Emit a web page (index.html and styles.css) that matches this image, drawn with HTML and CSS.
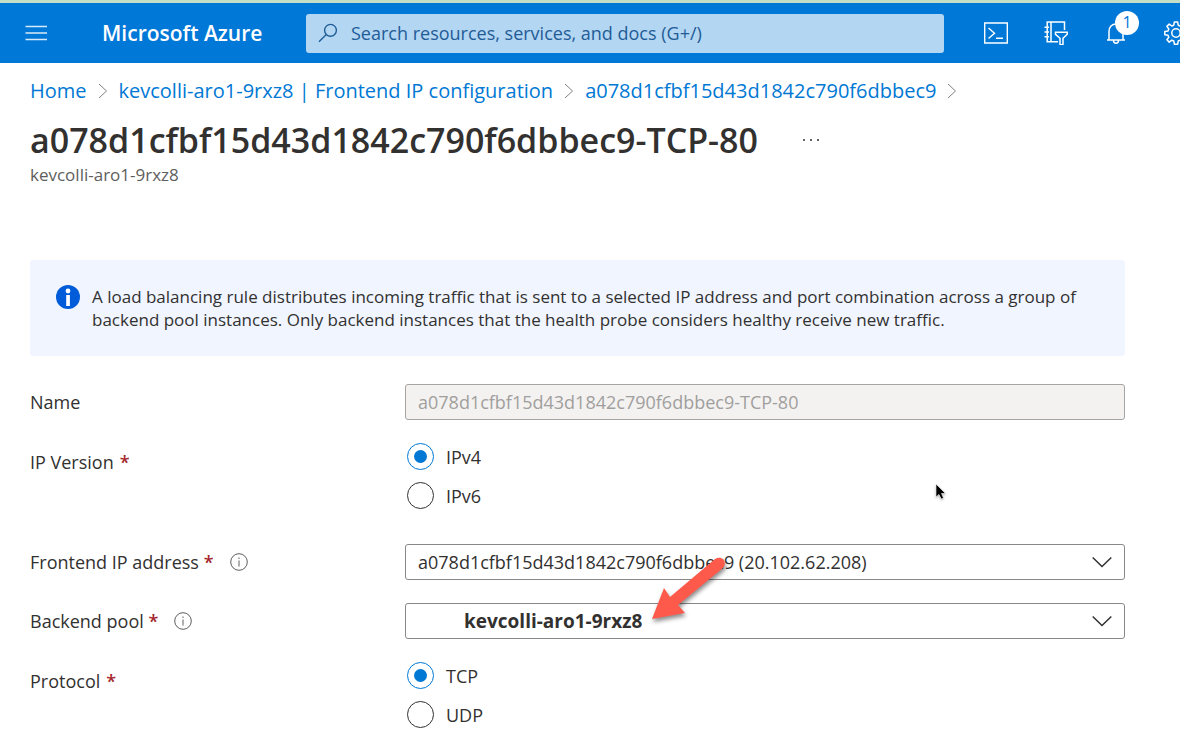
FILE: index.html
```html
<!DOCTYPE html>
<html lang="en">
<head>
<meta charset="utf-8">
<title>Load balancing rule - Microsoft Azure</title>
<meta name="viewport" content="width=device-width, initial-scale=1">
<link rel="stylesheet" href="styles.css">
</head>
<body>
<header class="topbar">
  <button class="icon-button" type="button" aria-label="Show portal menu">
    <svg width="24" height="24" viewBox="0 0 24 24" fill="none" stroke="#d7eaf9" stroke-width="1.5"><path d="M1.500 5.500H23M1.500 12H23M1.500 18.500H23"/></svg>
  </button>
  <a class="brand" href="#">Microsoft Azure</a>
  <div class="search">
    <svg width="20" height="20" viewBox="0 0 20 20" fill="none" stroke="#1f5c97" stroke-width="1.400"><circle cx="12.500" cy="7.300" r="5.900"/><path d="M8.300 11.500 1 18.700"/></svg>
    <input class="search-input" type="text" aria-label="Search" placeholder="Search resources, services, and docs (G+/)">
  </div>
  <nav class="tools" aria-label="Portal tools">
    <button class="icon-button" type="button" aria-label="Cloud Shell">
      <svg width="24" height="24" viewBox="0 0 24 24" fill="none" stroke="#fff" stroke-width="1.400"><path d="M.7 2H23.300V22H.7ZM4.500 7l6 5.200-6 5.300M12 17.200h7"/></svg>
    </button>
    <button class="icon-button" type="button" aria-label="Directories and subscriptions">
      <svg width="24" height="24" viewBox="0 0 24 24" fill="none" stroke="#fff" stroke-width="1.500"><path d="M20.500 9V1H3.200V20.700H14M7 1V20.700M.5 6.200H5M.5 11H5M.5 15.700H5"/><path d="M11.500 11.300H23.200V13.300L19 17.300V23.700H16V17.300L11.500 13.300Z"/></svg>
    </button>
    <button class="icon-button notifications" type="button" aria-label="Notifications, 1 new">
      <svg width="24" height="24" viewBox="0 0 24 24" fill="none" stroke="#fff" stroke-width="1.500"><path d="M3 19H21M5 19V10.500C5 6 8 3 12 3S19 6 19 10.500V19M9.500 19.500C9.500 23 14.500 23 14.500 19.500"/></svg>
      <span class="badge">1</span>
    </button>
    <button class="icon-button" type="button" aria-label="Settings">
      <svg width="24" height="24" viewBox="0 0 24 24" fill="none" stroke="#fff" stroke-width="1.500" stroke-linejoin="round"><circle cx="12" cy="12" r="4.200"/><path d="M10.300 1h3.400l.5 3.200 2 .8 2.700-1.900 2.200 2.300L19.200 8l.8 2 3.200.4v3.300l-3.200.5-.8 2 1.900 2.600-2.300 2.300-2.600-1.900-2 .8-.5 3.200h-3.400L9.800 20l-2-.8-2.600 1.900-2.300-2.300 1.900-2.600-.8-2L.8 13.700v-3.300L4 10l.8-2-1.900-2.600 2.300-2.300L7.800 5l2-.8Z"/></svg>
    </button>
  </nav>
</header>

<main class="blade">
  <nav class="breadcrumb" aria-label="Breadcrumb">
    <a href="#">Home</a>
    <svg class="crumb-arrow" viewBox="0 0 10 16"><path d="M1 1l7.500 7L1 15"/></svg>
    <a href="#">kevcolli-aro1-9rxz8 | Frontend IP configuration</a>
    <svg class="crumb-arrow" viewBox="0 0 10 16"><path d="M1 1l7.500 7L1 15"/></svg>
    <a href="#">a078d1cfbf15d43d1842c790f6dbbec9</a>
    <svg class="crumb-arrow" viewBox="0 0 10 16"><path d="M1 1l7.500 7L1 15"/></svg>
  </nav>
  <div class="title-row">
    <h1 class="title">a078d1cfbf15d43d1842c790f6dbbec9-TCP-80</h1>
    <button class="more" type="button" aria-label="More actions"><svg width="18" height="4" viewBox="0 0 18 4" fill="#323130"><circle cx="2" cy="2" r="1"/><circle cx="9" cy="2" r="1"/><circle cx="16" cy="2" r="1"/></svg></button>
  </div>
  <p class="subtitle">kevcolli-aro1-9rxz8</p>

  <section class="notice">
    <svg class="notice-icon" width="24" height="24" viewBox="0 0 24 24"><circle cx="12" cy="12" r="12" fill="#015cda"/><circle cx="12" cy="6" r="2.400" fill="#fff"/><path d="M10.200 10h3.700v11h-3.700z" fill="#fff"/></svg>
    <p class="notice-text">A load balancing rule distributes incoming traffic that is sent to a selected IP address and port combination across a group of backend pool instances. Only backend instances that the health probe considers healthy receive new traffic.</p>
  </section>

  <form class="form">
    <div class="row">
      <label class="label" for="name">Name</label>
      <input class="field" id="name" type="text" value="a078d1cfbf15d43d1842c790f6dbbec9-TCP-80" disabled>
    </div>
    <div class="row row-radios" role="radiogroup" aria-labelledby="ip-label">
      <span class="label" id="ip-label">IP Version <span class="required">*</span></span>
      <div class="radios">
        <label class="radio"><input type="radio" name="ip" checked>IPv4</label>
        <label class="radio"><input type="radio" name="ip">IPv6</label>
      </div>
    </div>
    <div class="row">
      <div class="label"><label for="frontend">Frontend IP address <span class="required">*</span></label>
        <svg class="hint" viewBox="0 0 18 18"><circle cx="9" cy="9" r="8.300"/><path d="M9 7.500v6M9 4.500v1.500"/></svg>
      </div>
      <div class="picker">
        <select class="field" id="frontend"><option>a078d1cfbf15d43d1842c790f6dbbec9 (20.102.62.208)</option></select>
        <svg class="chevron" viewBox="0 0 20 12"><path d="M.7 1.500 10 10.500 19.300 1.500"/></svg>
      </div>
    </div>
    <div class="row">
      <div class="label"><label for="backend">Backend pool <span class="required">*</span></label>
        <svg class="hint" viewBox="0 0 18 18"><circle cx="9" cy="9" r="8.300"/><path d="M9 7.500v6M9 4.500v1.500"/></svg>
      </div>
      <div class="picker">
        <select class="field field-pool" id="backend"><option>kevcolli-aro1-9rxz8</option></select>
        <svg class="chevron" viewBox="0 0 20 12"><path d="M.7 1.500 10 10.500 19.300 1.500"/></svg>
        <svg class="callout" width="84" height="72" viewBox="0 0 84 72"><path d="M3 63 15 32 21 41 66 3C73-1 79 6 74 12L29 49 36 57Z" fill="#fe5a4c"/></svg>
      </div>
    </div>
    <div class="row row-radios" role="radiogroup" aria-labelledby="protocol-label">
      <span class="label" id="protocol-label">Protocol <span class="required">*</span></span>
      <div class="radios">
        <label class="radio"><input type="radio" name="protocol" checked>TCP</label>
        <label class="radio"><input type="radio" name="protocol">UDP</label>
      </div>
    </div>
  </form>
</main>
<svg class="pointer" width="12" height="18" viewBox="0 0 12 18"><path d="M1 1V14L4 11.500 6.200 16 8.500 15 6.500 10.500H10.500Z" fill="#000" stroke="#fff" stroke-width=".6"/></svg>
</body>
</html>
```
FILE: styles.css
```css
* { box-sizing: border-box; }

body {
  margin: 0;
  overflow-x: hidden;
  background: #fff;
  color: #323130;
  font-family: "Open Sans", "Noto Sans", sans-serif;
  font-size: 18px;
  line-height: 24px;
}

a { color: #0078d4; text-decoration: none; }
button { padding: 0; border: 0; background: none; }
svg { display: block; }

.topbar {
  display: flex;
  align-items: center;
  height: 63px;
  padding-left: 24px;
  overflow: hidden;
  border-top: 3px solid #c5dfc6;
  background: #0078d7;
}

.icon-button { flex: none; width: 24px; height: 24px; }

.brand {
  flex: none;
  width: 258px;
  padding-left: 54px;
  color: #fff;
  font-size: 21px;
  font-weight: 600;
  white-space: nowrap;
}

.search {
  display: flex;
  flex: 1;
  align-items: center;
  gap: 13px;
  height: 39px;
  padding: 0 12px;
  border-radius: 3px;
  background: #b3d6f2;
}

.search-input {
  flex: 1;
  min-width: 0;
  padding: 0;
  border: 0;
  outline: 0;
  background: none;
  font: inherit;
}

.search-input::placeholder { color: #1f5c97; opacity: 1; }

.tools {
  display: flex;
  gap: 36px;
  margin-right: -8px;
  padding-left: 40px;
}

.notifications { position: relative; }

.badge {
  position: absolute;
  top: -10px;
  left: 11px;
  width: 24px;
  height: 24px;
  border-radius: 50%;
  background: #fff;
  color: #0078d7;
  font-family: "Open Sans", "Noto Sans", sans-serif;
  font-size: 16px;
  line-height: 22px;
  text-align: center;
}

.blade { padding: 16px 55px 0 30px; }

.breadcrumb {
  display: flex;
  align-items: center;
  gap: 11px;
  font-size: 20px;
  white-space: nowrap;
}

.crumb-arrow {
  flex: none;
  width: 10px;
  height: 16px;
  fill: none;
  stroke: #808080;
}

.title-row {
  display: flex;
  align-items: center;
  gap: 44px;
  margin-top: 14px;
}

.title {
  margin: 0;
  font-size: 34px;
  font-weight: 600;
  line-height: 46px;
}

.subtitle {
  margin: 0;
  color: #605e5c;
  font-size: 17px;
}

.notice {
  display: flex;
  gap: 12px;
  min-height: 96px;
  margin: 73px 0 28px;
  padding: 25px 26px;
  border-radius: 3px;
  background: #f0f5ff;
}

.notice-icon { flex: none; }

.notice-text {
  margin: 0;
  font-size: 17px;
  line-height: 23px;
}

.form { display: grid; gap: 23px; }

.row {
  display: grid;
  grid-template-columns: 375px 1fr;
  align-items: center;
}

.row-radios { align-items: start; }
.row-radios:not(:last-child) { margin-bottom: 12px; }
.row-radios .label { padding-top: 7px; }

.label { display: flex; align-items: center; gap: 16px; }
span.label { gap: 6px; }
.required { color: #a4262c; font-weight: 600; }

.hint {
  width: 18px;
  height: 18px;
  fill: none;
  stroke: #605e5c;
}

.field {
  width: 100%;
  height: 36px;
  padding: 0 12px;
  border: 1px solid #8a8886;
  border-radius: 3px;
  appearance: none;
  background: #fff;
  color: #323130;
  font: inherit;
}

.field:disabled {
  border-color: #a6a4a2;
  background: #f3f2f1;
  color: #a19f9d;
}

.field-pool { padding-left: 58px; font-size: 19px; font-weight: 700; }

.picker { position: relative; }

.chevron {
  position: absolute;
  top: 12px;
  right: 13px;
  width: 20px;
  height: 12px;
  fill: none;
  stroke: #323130;
  stroke-width: 1.5;
  pointer-events: none;
}

.callout {
  position: absolute;
  top: -47px;
  left: 244px;
  overflow: visible;
  filter: drop-shadow(1px 3px 2px rgba(0, 0, 0, .45));
  pointer-events: none;
}

.radios { display: grid; gap: 12px; padding-left: 2px; }

.radio {
  display: flex;
  align-items: center;
  gap: 12px;
  height: 27px;
}

.radio input {
  display: grid;
  place-items: center;
  width: 27px;
  height: 27px;
  margin: 0;
  border: 1px solid #323130;
  border-radius: 50%;
  appearance: none;
}

.radio input:checked { border-color: #0078d4; }

.radio input:checked::before {
  width: 13px;
  height: 13px;
  border-radius: 50%;
  background: #0078d4;
  content: "";
}

.pointer {
  position: absolute;
  top: 483px;
  left: 935px;
  filter: drop-shadow(0 1px 1px rgba(0, 0, 0, .3));
}
```
